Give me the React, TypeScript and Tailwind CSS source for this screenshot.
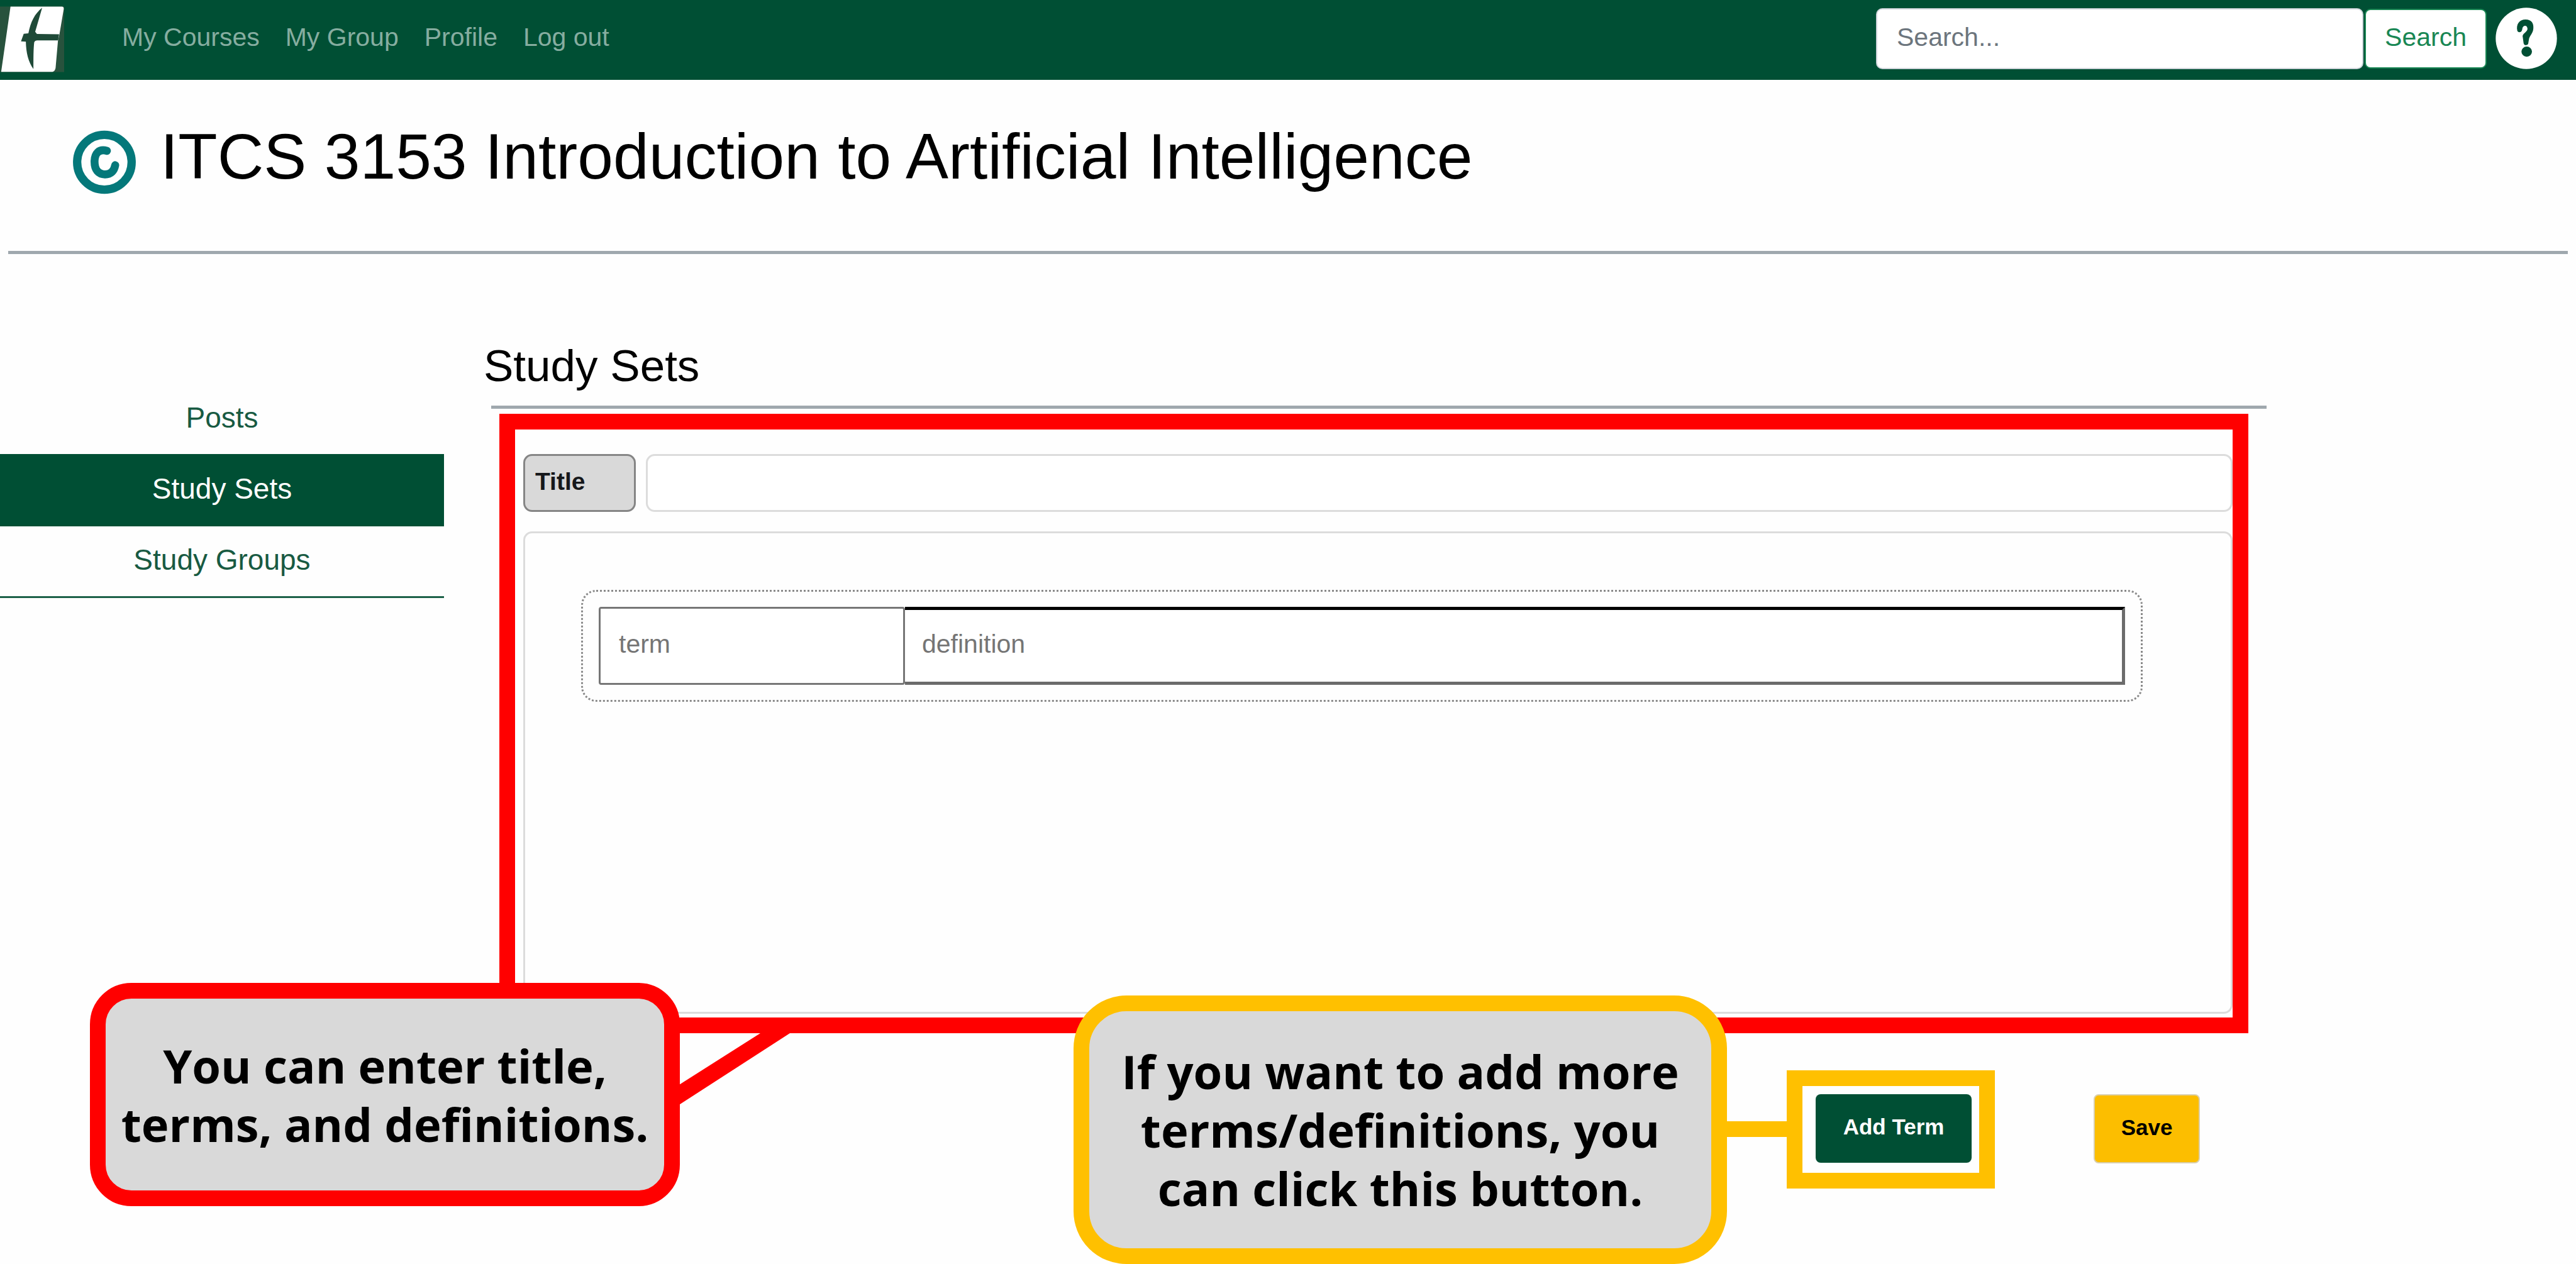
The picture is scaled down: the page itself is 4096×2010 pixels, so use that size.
import type { ReactNode } from "react";

const navLinks = ["My Courses", "My Group", "Profile", "Log out"];

function Logo() {
  return (
    <svg viewBox="0 34 330 337" className="h-[105px] w-[102px] shrink-0" aria-hidden="true">
      <rect x="0" y="34" width="330" height="337" fill="#28523d" />
      <path d="M54 34H318Q329 35 328 46L306 176L298 212L286 350Q283 368 270 370H6Z" fill="#fff" />
      <path
        d="M217 40C178 72 158 112 146 172L122 174L108 213L133 215C134 270 146 322 172 355C172 300 172 250 176 218Q180 208 192 208H299L304 177L190 175L181 164Z"
        fill="#1f4a38"
      />
    </svg>
  );
}

function CourseIcon() {
  return (
    <svg viewBox="40 47 330 332" className="mt-20 size-[102px] shrink-0" aria-hidden="true" fill="none" stroke="#04787a">
      <ellipse cx="205" cy="213" rx="141" ry="142" strokeWidth="43" />
      <path d="M218 154C176 142 154 168 154 210C154 252 174 276 208 276C240 276 256 256 261 228" strokeWidth="41" strokeLinecap="round" />
    </svg>
  );
}

function HelpIcon() {
  return (
    <svg viewBox="36 40 316 316" className="size-[98px]" aria-hidden="true">
      <circle cx="194" cy="198" r="157" fill="#fff" />
      <path
        d="M148 160C140 124 160 101 190 101C222 101 233 122 230 148C228 172 212 184 208 200L204 224Q202 233 192 233Q182 233 180 222L175 186C178 170 201 164 200 148C198 128 178 130 174 146C173 154 172 160 167 164Q154 170 148 160Z"
        fill="#004f34"
      />
      <ellipse cx="196" cy="266" rx="27" ry="26" fill="#004f34" />
    </svg>
  );
}

function SideLink({ children, active = false }: { children: ReactNode; active?: boolean }) {
  return (
    <a
      href="#"
      aria-current={active ? "page" : undefined}
      className={
        active
          ? "flex h-[115px] items-center justify-center bg-[#004f34] pb-1 text-white"
          : "flex h-[111px] items-center justify-center pb-1 text-[#185a42]"
      }
    >
      {children}
    </a>
  );
}

export default function App() {
  return (
    <div className="min-h-screen overflow-x-hidden bg-[#fefefe] text-[41px] text-black font-['Liberation_Sans',Arial,sans-serif]">
      <header className="flex h-[127px] items-start bg-[#004f34]">
        <a href="#" aria-label="Home" className="mt-[10px]">
          <Logo />
        </a>
        <nav className="ml-[92px] flex h-[120px] flex-1 items-center gap-[41px] text-[#86ada0]">
          {navLinks.map((l) => (
            <a key={l} href="#">
              {l}
            </a>
          ))}
        </nav>
        <form className="mt-[13px] flex items-center gap-[2px]" role="search">
          <input
            type="search"
            aria-label="Search"
            placeholder="Search..."
            className="h-[97px] w-[775px] rounded-[10px] border-2 border-[#ced4da] bg-white px-[31px] pb-1 placeholder:text-[#6c757d] placeholder:opacity-100"
          />
          <button type="button" className="h-[95px] w-[194px] rounded-[9px] border-2 border-[#198754] bg-white pb-1 text-[#198754]">
            Search
          </button>
        </form>
        <a href="#" aria-label="Help" className="mr-[30px] ml-[14px] mt-3">
          <HelpIcon />
        </a>
      </header>

      <div className="flex h-[272px] items-start gap-[38px] pl-[115px]">
        <CourseIcon />
        <h1 className="mt-[62px] text-[102px] leading-[120px]">ITCS 3153 Introduction to Artificial Intelligence</h1>
      </div>
      <hr className="mx-[13px] border-0 border-t-[5px] border-[#9fa8ae]" />

      <div className="flex items-start">
        <nav className="mt-[207px] w-[706px] shrink-0 border-b-[3px] border-[#1b6047] text-[46px]">
          <SideLink>Posts</SideLink>
          <SideLink active>Study Sets</SideLink>
          <SideLink>Study Groups</SideLink>
        </nav>

        <main className="mr-[492px] min-w-0 flex-1 pl-[63px] pt-[138px]">
          <h2 className="text-[71px] leading-[80px]">Study Sets</h2>
          <hr className="ml-3 mt-[23px] border-0 border-t-[5px] border-[#9fa8ae]" />

          <div className="relative mt-2 mr-[29px] ml-[25px] border-[25px] border-[#ff0000] pt-[39px] pb-[6px] pl-[13px]">
            <div className="flex h-[92px] gap-4">
              <label
                htmlFor="set-title"
                className="flex w-[179px] items-center rounded-[14px] border-[3px] border-[#858585] bg-[#d9d9d9] pb-1 pl-4 text-[39px] font-bold text-[#16181b]"
              >
                Title
              </label>
              <input id="set-title" type="text" className="min-w-0 flex-1 rounded-[14px] border-[3px] border-[#dcdcdc] bg-white px-8" />
            </div>
            <div className="mt-[31px] h-[767px] rounded-[14px] border-[3px] border-[#dcdcdc] pt-[90px] pr-[140px] pl-[89px]">
              <div className="flex h-[178px] rounded-[24px] border-[3px] border-dotted border-[#8a8a8a] py-6 pr-[25px] pl-[25px]">
                <input
                  type="text"
                  aria-label="term"
                  placeholder="term"
                  className="w-[487px] rounded-[4px] border-[3px] border-[#767676] bg-white px-[29px] pb-1 placeholder:text-[#757575] placeholder:opacity-100"
                />
                <input
                  type="text"
                  aria-label="definition"
                  placeholder="definition"
                  className="min-w-0 flex-1 border-[5px] border-t-black border-r-[#6b6b6b] border-b-[#6b6b6b] border-l-0 bg-white px-[27px] pb-1 placeholder:text-[#757575] placeholder:opacity-100"
                />
              </div>
            </div>

            <svg
              viewBox="0 0 200 130"
              className="absolute -bottom-[155px] left-[242px] h-[130px] w-[200px]"
              aria-hidden="true"
            >
              <path d="M0 94L148 0H195L0 126Z" fill="#ff0000" />
            </svg>
            <div
              role="note"
              className="absolute -bottom-[300px] -left-[676px] flex h-[355px] w-[938px] items-center justify-center rounded-[66px] border-[25px] border-[#ff0000] bg-[#d9d9d9] text-center text-[74px] leading-[93px] font-bold whitespace-nowrap font-['Open_Sans','Noto_Sans_CJK_KR',sans-serif]"
            >
              You can enter title,
              <br />
              terms, and definitions.
            </div>
          </div>

          <div className="mt-[59px] flex items-start justify-end pr-[106px]">
            <div className="relative border-[25px] border-[#ffc000] bg-[#fefefe] pt-[13px] pr-3 pb-4 pl-[21px]">
              <button type="button" className="block h-[109px] w-[248px] rounded-[8px] bg-[#004f34] pb-1 text-[35px] font-bold text-white">
                Add Term
              </button>
              <div
                role="note"
                className="absolute -top-[144px] right-[401px] flex h-[427px] w-[1039px] items-center justify-center rounded-[84px] border-[25px] border-[#ffc000] bg-[#d9d9d9] text-center text-[74px] leading-[93px] font-bold whitespace-nowrap font-['Open_Sans','Noto_Sans_CJK_KR',sans-serif]"
              >
                If you want to add more
                <br />
                terms/definitions, you
                <br />
                can click this button.
              </div>
              <div className="absolute top-14 right-[306px] h-[25px] w-[96px] bg-[#ffc000]" />
            </div>
            <button type="button" className="mt-[38px] ml-[157px] h-[110px] w-[169px] rounded-[8px] border-2 border-[#d9cfae] bg-[#fcbe00] pb-1 text-[35px] font-bold text-black">
              Save
            </button>
          </div>
        </main>
      </div>
    </div>
  );
}
